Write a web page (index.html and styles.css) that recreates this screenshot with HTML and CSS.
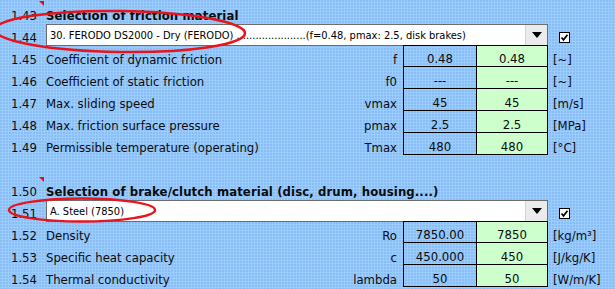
FILE: index.html
```html
<!DOCTYPE html>
<html lang="en">

<head>
    <meta charset="UTF-8">
    <title>Brake material selection</title>
    <link rel="stylesheet" href="styles.css">
</head>

<body>
    <div class="sheet">
        <div class="row">
            <span class="num has-note">1.43</span>
            <span class="title">Selection of friction material</span>
        </div>
        <div class="row">
            <span class="num">1.44</span>
            <div class="combo">
                <span class="combo-text">30. FERODO DS2000 - Dry (FERODO) ......................(f=0.48, pmax: 2.5, disk brakes)</span>
                <span class="combo-btn"><span class="arrow"></span></span>
            </div>
            <span class="cell-check"><span class="checkbox"><svg width="9" height="9" viewBox="0 0 9 9"><path d="M1.5 4.5 L3.5 6.8 L7.5 1.8" fill="none" stroke="#000" stroke-width="1.7"/></svg></span></span>
        </div>
        <div class="row data first">
            <span class="num">1.45</span>
            <span class="label">Coefficient of dynamic friction</span>
            <span class="sym">f</span>
            <span class="val">0.48</span>
            <span class="val green">0.48</span>
            <span class="unit">[~]</span>
        </div>
        <div class="row data">
            <span class="num">1.46</span>
            <span class="label">Coefficient of static friction</span>
            <span class="sym">f0</span>
            <span class="val">---</span>
            <span class="val green">---</span>
            <span class="unit">[~]</span>
        </div>
        <div class="row data">
            <span class="num">1.47</span>
            <span class="label">Max. sliding speed</span>
            <span class="sym">vmax</span>
            <span class="val">45</span>
            <span class="val green">45</span>
            <span class="unit">[m/s]</span>
        </div>
        <div class="row data">
            <span class="num">1.48</span>
            <span class="label">Max. friction surface pressure</span>
            <span class="sym">pmax</span>
            <span class="val">2.5</span>
            <span class="val green">2.5</span>
            <span class="unit">[MPa]</span>
        </div>
        <div class="row data">
            <span class="num">1.49</span>
            <span class="label">Permissible temperature (operating)</span>
            <span class="sym">Tmax</span>
            <span class="val">480</span>
            <span class="val green">480</span>
            <span class="unit">[°C]</span>
        </div>
        <div class="row"></div>
        <div class="row">
            <span class="num has-note">1.50</span>
            <span class="title">Selection of brake/clutch material (disc, drum, housing....)</span>
        </div>
        <div class="row">
            <span class="num">1.51</span>
            <div class="combo">
                <span class="combo-text">A. Steel (7850)</span>
                <span class="combo-btn"><span class="arrow"></span></span>
            </div>
            <span class="cell-check"><span class="checkbox"><svg width="9" height="9" viewBox="0 0 9 9"><path d="M1.5 4.5 L3.5 6.8 L7.5 1.8" fill="none" stroke="#000" stroke-width="1.7"/></svg></span></span>
        </div>
        <div class="row data first">
            <span class="num">1.52</span>
            <span class="label">Density</span>
            <span class="sym">Ro</span>
            <span class="val">7850.00</span>
            <span class="val green">7850</span>
            <span class="unit">[kg/m³]</span>
        </div>
        <div class="row data">
            <span class="num">1.53</span>
            <span class="label">Specific heat capacity</span>
            <span class="sym">c</span>
            <span class="val">450.000</span>
            <span class="val green">450</span>
            <span class="unit">[J/kg/K]</span>
        </div>
        <div class="row data">
            <span class="num">1.54</span>
            <span class="label">Thermal conductivity</span>
            <span class="sym">lambda</span>
            <span class="val">50</span>
            <span class="val green">50</span>
            <span class="unit">[W/m/K]</span>
        </div>

        <!-- red highlight rings drawn over the sheet -->
        <svg class="marks" width="615" height="289" viewBox="0 0 615 289">
            <ellipse cx="120" cy="31.5" rx="125" ry="20.5" fill="none" stroke="#e8141c" stroke-width="2.5" transform="rotate(0.8 120 31.5)"/>
            <ellipse cx="82" cy="210" rx="73" ry="11.5" fill="none" stroke="#e8141c" stroke-width="2.5"/>
        </svg>
    </div>
</body>

</html>
```

FILE: styles.css
```css
body {
    margin: 0;
    padding: 0;
    background-color: #99ccff;
    background-image: radial-gradient(circle at 1px 1px, rgba(40, 80, 150, 0.12) 0.8px, transparent 1px);
    background-size: 3px 3px;
    font-family: "DejaVu Sans Condensed", "DejaVu Sans", sans-serif;
    font-stretch: condensed;
    font-size: 13px;
    color: #0c0c0c;
}

.sheet {
    position: relative;
    width: 615px;
    height: 289px;
    padding-top: 1px;
    box-sizing: border-box;
    overflow: hidden;
}

.row {
    display: grid;
    grid-template-columns: 44px 289px 70px 73px 72px 1fr;
    height: 22px;
}

.row > span {
    display: flex;
    align-items: flex-end;
    white-space: nowrap;
    line-height: 15px;
    padding-bottom: 0;
    box-sizing: border-box;
}

.num {
    position: relative;
    justify-content: flex-end;
    padding-right: 7px;
}

.has-note::after {
    content: "";
    position: absolute;
    top: 0;
    right: 0;
    width: 0;
    height: 0;
    border-top: 5px solid #ff0000;
    border-left: 5px solid transparent;
}

.title {
    grid-column: 2 / 7;
    font-weight: bold;
    letter-spacing: 0.1px;
    padding-left: 2px;
}

.label {
    padding-left: 2px;
}

.sym {
    justify-content: flex-end;
    padding-right: 6px;
}

.val {
    justify-content: center;
    border-left: 1px solid #000;
    border-bottom: 1px solid #000;
}

.val.green {
    background-color: #ccffcc;
    border-right: 1px solid #000;
}

.first .val {
    border-top: 1px solid #000;
}

.unit {
    padding-left: 5px;
}

.combo {
    grid-column: 2 / 6;
    margin: 1px 0 -1px 2px;
    display: flex;
    background: #fff;
    border: 1px solid #6d6d6d;
    box-sizing: border-box;
    height: 22px;
}

.combo-text {
    flex: 1;
    font-size: 11px;
    line-height: 20px;
    padding-left: 3px;
    padding-top: 1px;
    white-space: nowrap;
    overflow: hidden;
    color: #000;
}

.combo-btn {
    width: 21px;
    background: #ebebeb;
    border-left: 1px solid #d4d4d4;
    display: flex;
    align-items: center;
    justify-content: center;
}

.arrow {
    width: 0;
    height: 0;
    border-left: 5px solid transparent;
    border-right: 5px solid transparent;
    border-top: 6px solid #000;
}

.row > .cell-check {
    align-items: flex-start;
    padding: 9px 0 0 11px;
}

.checkbox {
    width: 11px;
    height: 11px;
    box-sizing: border-box;
    border: 1px solid #000;
    background: #fff;
    display: flex;
    align-items: center;
    justify-content: center;
}

.checkbox svg {
    display: block;
}

.marks {
    position: absolute;
    top: 0;
    left: 0;
    pointer-events: none;
}
```
